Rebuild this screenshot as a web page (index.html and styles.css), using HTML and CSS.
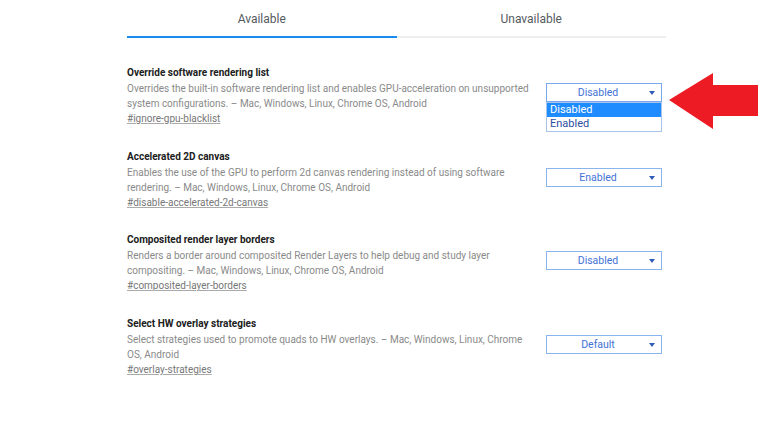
FILE: index.html
```html
<!DOCTYPE html>
<html>
<head>
<meta charset="utf-8">
<link rel="stylesheet" href="styles.css">
</head>
<body>
<div class="page">
  <div class="tabs">
    <div class="tab active">Available</div>
    <div class="tab">Unavailable</div>
  </div>
  <div class="flags">
    <div class="flag">
      <div class="info">
        <div class="title">Override software rendering list</div>
        <div class="desc">Overrides the built-in software rendering list and enables GPU-acceleration on unsupported system configurations. – Mac, Windows, Linux, Chrome OS, Android</div>
        <a class="link">#ignore-gpu-blacklist</a>
      </div>
      <div class="control first">
        <div class="select open"><span>Disabled</span><i class="caret"></i></div>
        <div class="options">
          <div class="option selected">Disabled</div>
          <div class="option">Enabled</div>
        </div>
      </div>
    </div>
    <div class="flag">
      <div class="info">
        <div class="title">Accelerated 2D canvas</div>
        <div class="desc">Enables the use of the GPU to perform 2d canvas rendering instead of using software rendering. – Mac, Windows, Linux, Chrome OS, Android</div>
        <a class="link">#disable-accelerated-2d-canvas</a>
      </div>
      <div class="control">
        <div class="select"><span>Enabled</span><i class="caret"></i></div>
      </div>
    </div>
    <div class="flag">
      <div class="info">
        <div class="title">Composited render layer borders</div>
        <div class="desc">Renders a border around composited Render Layers to help debug and study layer compositing. – Mac, Windows, Linux, Chrome OS, Android</div>
        <a class="link">#composited-layer-borders</a>
      </div>
      <div class="control">
        <div class="select"><span>Disabled</span><i class="caret"></i></div>
      </div>
    </div>
    <div class="flag">
      <div class="info">
        <div class="title">Select HW overlay strategies</div>
        <div class="desc">Select strategies used to promote quads to HW overlays. – Mac, Windows, Linux, Chrome OS, Android</div>
        <a class="link">#overlay-strategies</a>
      </div>
      <div class="control">
        <div class="select"><span>Default</span><i class="caret"></i></div>
      </div>
    </div>
  </div>
</div>
<svg class="arrow" width="778" height="432" viewBox="0 0 778 432">
  <polygon points="669,100 713,73 713,85 758,85 758,116 713,116 713,129" fill="#ed1c24"/>
</svg>
</body>
</html>
```
FILE: styles.css
```css
html, body {
  margin: 0;
  padding: 0;
  background: #ffffff;
}
body {
  font-family: Roboto, "Liberation Sans", sans-serif;
  width: 778px;
  height: 432px;
  overflow: hidden;
  position: relative;
}
.page {
  width: 539px;
  margin-left: 127px;
}
.tabs {
  display: flex;
}
.tab {
  flex: 1;
  text-align: center;
  font-size: 12px;
  color: #555a60;
  height: 36px;
  line-height: 38px;
  border-bottom: 2px solid #efefef;
}
.tab.active {
  border-bottom-color: #1a8cf0;
}
.flags {
  padding-top: 27px;
  display: flex;
  flex-direction: column;
  gap: 22.7px;
}
.flag {
  display: flex;
  align-items: flex-start;
}
.info {
  width: 412px;
  flex: none;
  font-size: 10px;
  line-height: 15px;
}
.title {
  font-weight: bold;
  color: #202020;
  margin-bottom: 1px;
}
.desc {
  color: #8a8a8a;
}
.link {
  color: #777;
  text-decoration: underline;
  text-decoration-color: #aaa;
}
.control {
  margin-left: 7px;
  margin-top: 19px;
  width: 116px;
  position: relative;
}
.control.first {
  margin-top: 18px;
}
.select {
  box-sizing: border-box;
  width: 116px;
  height: 19px;
  border: 1px solid #8ab4ee;
  font-size: 10.5px;
  line-height: 17px;
  color: #4272d6;
  text-align: center;
  padding-right: 12px;
  position: relative;
}
.select.open {
  border-color: #7aa7ea;
}
.caret {
  position: absolute;
  right: 6px;
  top: 7px;
  width: 0;
  height: 0;
  border-left: 3px solid transparent;
  border-right: 3px solid transparent;
  border-top: 4px solid #2e5cb8;
}
.options {
  position: absolute;
  left: 0;
  top: 19px;
  width: 116px;
  box-sizing: border-box;
  border: 1px solid #a9c4ea;
  background: #fff;
  z-index: 2;
}
.option {
  font-size: 11px;
  line-height: 14px;
  padding-left: 3px;
  color: #2c4f9e;
}
.option.selected {
  background: #1e8cff;
  color: #ffffff;
}
.arrow {
  position: absolute;
  left: 0;
  top: 0;
  pointer-events: none;
}
```
